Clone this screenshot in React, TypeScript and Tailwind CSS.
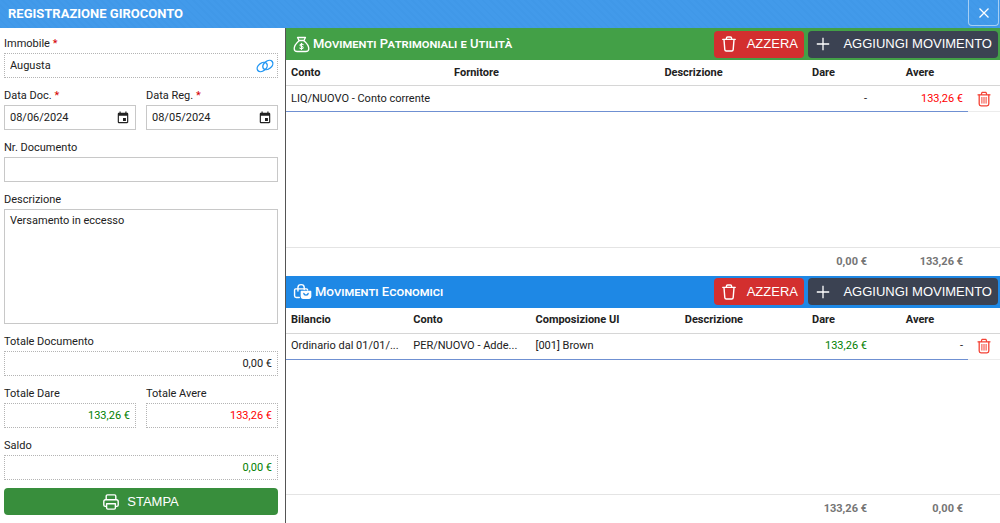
import React from "react";

type Column = {
    label: string;
    align?: "center";
    width?: string;
};

const Header = () => (
    <header className="flex h-7 shrink-0 items-center justify-between bg-[#4199e8] bg-[repeating-linear-gradient(45deg,#4098e8_0_2px,#429aea_2px_5px)] pl-2 pr-px">
        <h1 className="text-[13px] font-bold leading-6 text-white">REGISTRAZIONE GIROCONTO</h1>
        <button
            aria-label="Chiudi"
            className="mb-0.5 flex h-[26px] w-[31px] items-center justify-center rounded-b-sm border border-t-0 border-[#a5cff5] text-white"
        >
            <svg viewBox="0 0 12 12" className="size-3" fill="none" stroke="currentColor" strokeWidth="1.3">
                <path d="M1.5 1.5l9 9M10.5 1.5l-9 9" />
            </svg>
        </button>
    </header>
);

const CalendarIcon = () => (
    <svg viewBox="0 0 24 24" className="size-3.5 shrink-0" fill="#222">
        <path d="M17 12h-5v5h5v-5zM16 1v2H8V1H6v2H5c-1.11 0-1.99.9-1.99 2L3 19a2 2 0 0 0 2 2h14c1.1 0 2-.9 2-2V5c0-1.1-.9-2-2-2h-1V1h-2zm3 18H5V8h14v11z" />
    </svg>
);

const LinkIcon = () => (
    <svg viewBox="0 0 18 14" className="h-3.5 w-[18px]" fill="none" stroke="#2196f3" strokeWidth="1.4" strokeLinecap="round">
        <ellipse cx="6.2" cy="8" rx="5.6" ry="3.9" transform="rotate(-38 6.2 8)" />
        <ellipse cx="11.8" cy="6" rx="5.6" ry="3.9" transform="rotate(-38 11.8 6)" />
    </svg>
);

const MoneyBagIcon = () => (
    <svg viewBox="0 0 18 18" className="size-[17px]" fill="none" stroke="#fff" strokeWidth="1.4" strokeLinejoin="round" strokeLinecap="round">
        <path d="M6.4 4.8 L4.8 1.6 H13.2 L11.6 4.8 Z" />
        <path d="M6.4 5 C3.6 7.4 1.3 10.4 1.3 13.4 C1.3 15.6 2.6 16.4 4.6 16.4 H13.4 C15.4 16.4 16.7 15.6 16.7 13.4 C16.7 10.4 14.4 7.4 11.6 5" />
        <path d="M10.8 9.2 C10.2 8.2 7.4 8.2 7.4 9.7 C7.4 11.3 10.8 10.5 10.8 12.3 C10.8 13.8 7.8 13.8 7.2 12.7 M9 7.6 V14.4" strokeWidth="1.1" />
    </svg>
);

const BagsIcon = () => (
    <svg viewBox="0 0 20 18" className="h-[17px] w-[19px]" fill="none" stroke="#fff" strokeWidth="1.5" strokeLinejoin="round" strokeLinecap="round">
        <path d="M6.6 15.3 H3.4 C2.2 15.3 1.6 14.6 1.6 13.5 V7.4 C1.6 6.6 2 6.2 2.8 6.2 H14.2 C15 6.2 15.4 6.6 15.4 7.4" />
        <path d="M5.2 8.6 V4.6 C5.2 .8 11.8 .8 11.8 4.6 V7" />
        <path d="M8.8 9 H18.6 V14.4 C18.6 15.6 18 16.2 17 16.2 H10.4 C9.4 16.2 8.8 15.6 8.8 14.4 Z" fill="#fff" />
        <path d="M11.4 11 C11.6 13.4 15.8 13.4 16 11" stroke="#1e88e5" strokeWidth="1.4" />
    </svg>
);

const BinIcon = () => (
    <svg viewBox="0 0 14 16" className="h-4 w-3.5" fill="none" stroke="currentColor" strokeWidth="1.4" strokeLinejoin="round" strokeLinecap="round">
        <path d="M.8 3.4 H13.2 M4.4 3.2 V2.2 C4.4 1.4 4.9 1 5.6 1 H8.4 C9.1 1 9.6 1.4 9.6 2.2 V3.2" />
        <path d="M2 3.6 L2.8 13.6 C2.9 14.6 3.4 15 4.3 15 H9.7 C10.6 15 11.1 14.6 11.2 13.6 L12 3.6" />
    </svg>
);

const RowBinIcon = () => (
    <svg viewBox="0 0 14 16" className="h-4 w-3.5" fill="none" stroke="#f44336" strokeWidth="1.3" strokeLinejoin="round" strokeLinecap="round">
        <path d="M1 3.8 H13 M4.2 3.6 L5 1.4 H9 L9.8 3.6" />
        <path d="M2.2 3.8 V13 C2.2 14.2 2.8 14.8 4 14.8 H10 C11.2 14.8 11.8 14.2 11.8 13 V3.8" />
        <path d="M4.9 6.4 V12.2 M7 6.4 V12.2 M9.1 6.4 V12.2" strokeWidth="1" />
    </svg>
);

const PrinterIcon = () => (
    <svg viewBox="0 0 16 16" className="size-4" fill="none" stroke="#fff" strokeWidth="1.4" strokeLinejoin="round">
        <path d="M3.2 5.6 V2.2 C3.2 1.4 3.7 .9 4.5 .9 H11.5 C12.3 .9 12.8 1.4 12.8 2.2 V5.6" />
        <path d="M3.4 12.4 H2.2 C1.3 12.4 .8 11.9 .8 11 V7.6 C.8 6.5 1.4 5.8 2.6 5.8 H13.4 C14.6 5.8 15.2 6.5 15.2 7.6 V11 C15.2 11.9 14.7 12.4 13.8 12.4 H12.6" />
        <path d="M3.6 9.8 H12.4 V13.8 C12.4 14.7 12 15.1 11.2 15.1 H4.8 C4 15.1 3.6 14.7 3.6 13.8 Z" />
    </svg>
);

const Field = ({
    id,
    label,
    value,
    required,
    readOnly,
    valueClass = "",
    icon,
}: {
    id: string;
    label: string;
    value: string;
    required?: boolean;
    readOnly?: boolean;
    valueClass?: string;
    icon?: React.ReactNode;
}) => (
    <div className="min-w-0 flex-1">
        <label htmlFor={id} className="block leading-[19px]">
            {label} {required && <span className="text-[#d50000]">*</span>}
        </label>
        <div
            className={`flex h-[25px] items-center border px-[5px] ${
                readOnly ? "border-dotted border-[#b4b4b4]" : "border-[#c8c8c8]"
            }`}
        >
            <input
                id={id}
                defaultValue={value}
                readOnly={readOnly}
                className={`min-w-0 flex-1 outline-none ${valueClass}`}
            />
            {icon}
        </div>
    </div>
);

const Sidebar = () => (
    <aside className="flex w-[286px] shrink-0 flex-col gap-2 border-r border-[#555] pb-2 pl-1 pr-[7px] pt-1.5">
        <div className="flex">
            <Field
                id="immobile"
                label="Immobile"
                value="Augusta"
                required
                readOnly
                icon={
                    <button aria-label="Apri immobile" className="-mr-0.5">
                        <LinkIcon />
                    </button>
                }
            />
        </div>
        <div className="flex gap-2.5">
            <Field id="data-doc" label="Data Doc." value="08/06/2024" required icon={<CalendarIcon />} />
            <Field id="data-reg" label="Data Reg." value="08/05/2024" required icon={<CalendarIcon />} />
        </div>
        <div className="flex">
            <Field id="nr-documento" label="Nr. Documento" value="" />
        </div>
        <div className="flex flex-1 flex-col">
            <label htmlFor="descrizione" className="block leading-[19px]">
                Descrizione
            </label>
            <textarea
                id="descrizione"
                defaultValue="Versamento in eccesso"
                className="min-h-12 flex-1 resize-none border border-[#c8c8c8] px-[5px] py-[3px] leading-4 outline-none"
            />
        </div>
        <div className="flex">
            <Field id="totale-documento" label="Totale Documento" value="0,00 €" readOnly valueClass="text-right" />
        </div>
        <div className="flex gap-2.5">
            <Field id="totale-dare" label="Totale Dare" value="133,26 €" readOnly valueClass="text-right text-[#008000]" />
            <Field id="totale-avere" label="Totale Avere" value="133,26 €" readOnly valueClass="text-right text-[#ff0000]" />
        </div>
        <div className="flex">
            <Field id="saldo" label="Saldo" value="0,00 €" readOnly valueClass="text-right text-[#008000]" />
        </div>
        <button className="flex h-[27px] shrink-0 items-center justify-center gap-2 rounded-sm bg-[#388e3c] font-['Liberation_Sans',sans-serif] text-[13px] text-white">
            <PrinterIcon />
            STAMPA
        </button>
    </aside>
);

const Movements = ({
    title,
    icon,
    barClass,
    columns,
    row,
    totals,
}: {
    title: string;
    icon: React.ReactNode;
    barClass: string;
    columns: Column[];
    row: { text: string; className?: string }[];
    totals: string[];
}) => (
    <section className="flex min-h-0 flex-1 flex-col">
        <div className={`flex h-8 shrink-0 items-center gap-[3px] pl-[7px] pr-0.5 text-white ${barClass}`}>
            {icon}
            <h2 className="flex-1 text-[13px] font-medium [font-variant-caps:small-caps]">{title}</h2>
            <div className="flex gap-1 font-['Liberation_Sans',sans-serif] text-[13px]">
                <button className="flex h-[27px] w-[90px] items-center justify-between rounded-sm bg-[#d32f2f] pl-2 pr-1.5">
                    <BinIcon />
                    AZZERA
                </button>
                <button className="flex h-[27px] w-[190px] items-center justify-between rounded-sm bg-[#3b4252] pl-2 pr-1.5">
                    <svg viewBox="0 0 14 14" className="size-3.5" fill="none" stroke="currentColor" strokeWidth="1.3">
                        <path d="M7 .8v12.4M.8 7h12.4" />
                    </svg>
                    AGGIUNGI MOVIMENTO
                </button>
            </div>
        </div>
        <div className="min-h-0 flex-1">
            <table className="h-full w-full table-fixed border-separate border-spacing-0">
                <thead>
                    <tr className="h-[26px]">
                        {columns.map((column) => (
                            <th
                                key={column.label}
                                className={`border-b border-[#d6d6d6] px-[5px] font-bold ${
                                    column.align === "center" ? "text-center" : "text-left"
                                } ${column.width ?? ""}`}
                            >
                                {column.label}
                            </th>
                        ))}
                        <td className="w-8 border-b border-[#d6d6d6]" />
                    </tr>
                </thead>
                <tbody>
                    <tr className="h-[26px]">
                        {row.map((cell, i) => (
                            <td
                                key={i}
                                className={`whitespace-nowrap border-b border-[#6f90d2] px-[5px] ${cell.className ?? ""}`}
                            >
                                {cell.text}
                            </td>
                        ))}
                        <td className="border-b border-[#ececec]">
                            <button aria-label="Elimina" className="mx-auto flex">
                                <RowBinIcon />
                            </button>
                        </td>
                    </tr>
                    <tr>
                        <td colSpan={columns.length + 1} />
                    </tr>
                </tbody>
                <tfoot>
                    <tr className="h-[29px] font-bold text-[#757575]">
                        <td colSpan={columns.length - 2} className="border-t border-[#e4e4e4]" />
                        {totals.map((total) => (
                            <td key={total} className="border-t border-[#e4e4e4] px-[5px] text-right">
                                {total}
                            </td>
                        ))}
                        <td className="border-t border-[#e4e4e4]" />
                    </tr>
                </tfoot>
            </table>
        </div>
    </section>
);

const App = () => {
    return (
        <div className="flex h-screen flex-col bg-white font-[Roboto,sans-serif] text-[11px] leading-4 text-[#212121]">
            <Header />
            <div className="flex min-h-0 flex-1">
                <Sidebar />
                <main className="flex min-w-0 flex-1 flex-col">
                    <Movements
                        title="Movimenti Patrimoniali e Utilità"
                        icon={<MoneyBagIcon />}
                        barClass="bg-[#43a047]"
                        columns={[
                            { label: "Conto" },
                            { label: "Fornitore" },
                            { label: "Descrizione", align: "center" },
                            { label: "Dare", align: "center", width: "w-[97px]" },
                            { label: "Avere", align: "center", width: "w-24" },
                        ]}
                        row={[
                            { text: "LIQ/NUOVO - Conto corrente" },
                            { text: "" },
                            { text: "" },
                            { text: "-", className: "text-right" },
                            { text: "133,26 €", className: "text-right text-[#ff0000]" },
                        ]}
                        totals={["0,00 €", "133,26 €"]}
                    />
                    <Movements
                        title="Movimenti Economici"
                        icon={<BagsIcon />}
                        barClass="bg-[#1e88e5]"
                        columns={[
                            { label: "Bilancio" },
                            { label: "Conto" },
                            { label: "Composizione UI" },
                            { label: "Descrizione", align: "center" },
                            { label: "Dare", align: "center", width: "w-[97px]" },
                            { label: "Avere", align: "center", width: "w-24" },
                        ]}
                        row={[
                            { text: "Ordinario dal 01/01/..." },
                            { text: "PER/NUOVO - Adde..." },
                            { text: "[001] Brown" },
                            { text: "" },
                            { text: "133,26 €", className: "text-right text-[#008000]" },
                            { text: "-", className: "text-right" },
                        ]}
                        totals={["133,26 €", "0,00 €"]}
                    />
                </main>
            </div>
        </div>
    );
};

export default App;
